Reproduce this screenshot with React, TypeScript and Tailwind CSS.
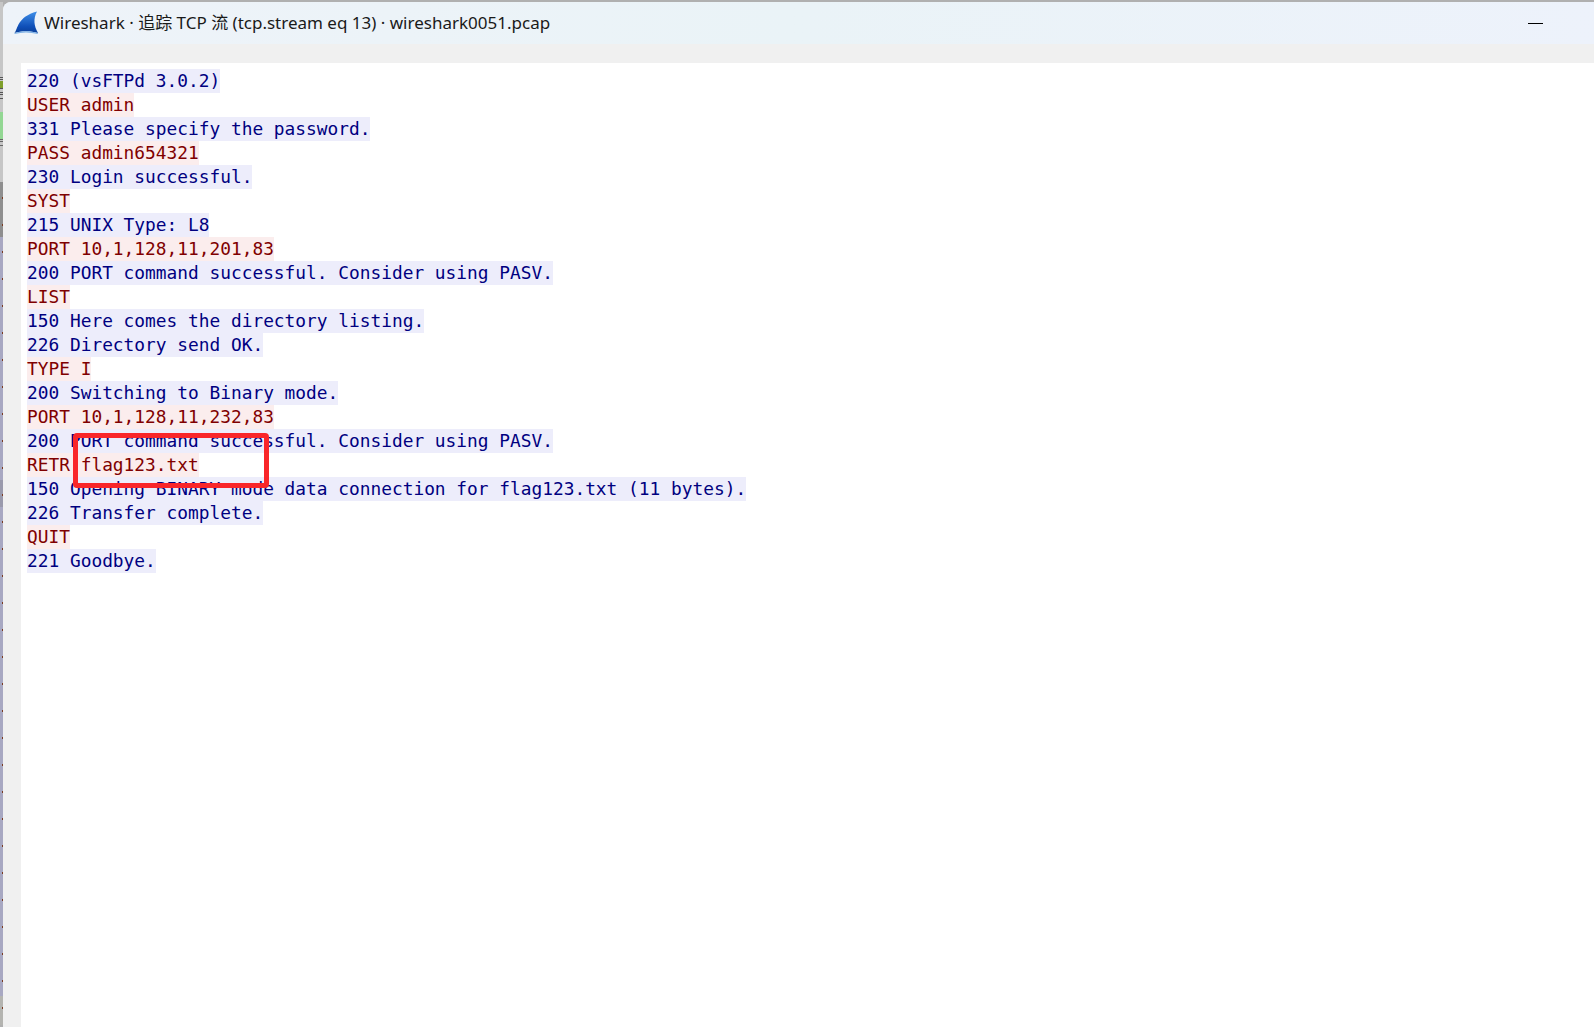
import React from 'react';

const lines: [string, boolean][] = [
  ['220 (vsFTPd 3.0.2)', true],
  ['USER admin', false],
  ['331 Please specify the password.', true],
  ['PASS admin654321', false],
  ['230 Login successful.', true],
  ['SYST', false],
  ['215 UNIX Type: L8', true],
  ['PORT 10,1,128,11,201,83', false],
  ['200 PORT command successful. Consider using PASV.', true],
  ['LIST', false],
  ['150 Here comes the directory listing.', true],
  ['226 Directory send OK.', true],
  ['TYPE I', false],
  ['200 Switching to Binary mode.', true],
  ['PORT 10,1,128,11,232,83', false],
  ['200 PORT command successful. Consider using PASV.', true],
  ['RETR flag123.txt', false],
  ['150 Opening BINARY mode data connection for flag123.txt (11 bytes).', true],
  ['226 Transfer complete.', true],
  ['QUIT', false],
  ['221 Goodbye.', true],
];

// the window behind shows through as a 3px sliver on the left
const sliver: [string, number][] = [
  ['#c6c6c6', 75],
  ['#555555', 1],
  ['#c6c6c6', 1],
  ['#555555', 1],
  ['#c6c6c6', 1],
  ['#7f9f2a', 7],
  ['#555555', 1],
  ['#c6c6c6', 3],
  ['#555555', 1],
  ['#c6c6c6', 1],
  ['#555555', 1],
  ['#c6c6c6', 3],
  ['#555555', 1],
  ['#c6c6c6', 13],
  ['#93d793', 27],
  ['#666666', 1],
  ['#c6c6c6', 1],
  ['#666666', 1],
  ['#c6c6c6', 3],
  ['#666666', 1],
  ['#c6c6c6', 36],
  ['#8f8f8f', 55],
  ['#a8a8c2', 243],
  ['#9a9aac', 27],
  ['#a8a8c2', 489],
  ['#b4b4b0', 29],
];

const dots = Array.from({ length: 31 }, (_, i) => i);

const SharkFin = () => (
  <svg width="24" height="24" viewBox="0 0 24 24">
    <defs>
      <linearGradient id="fin" x1="0" y1="0" x2="0" y2="1">
        <stop offset="0" stopColor="#3f8fe8" />
        <stop offset="0.7" stopColor="#0f4fb8" />
        <stop offset="1" stopColor="#0a3f9a" />
      </linearGradient>
    </defs>
    <path d="M0.500 22C4 18 3 6 23 0.500C19 8 20 15 24 22C16 19.500 8 19.500 0.500 22Z" fill="url(#fin)" />
    <path d="M0.500 22C8 19.500 16 19.500 24 22L23.500 23C16 21 8 21 0.500 23Z" fill="#7fb2e6" />
  </svg>
);

export default function App() {
  return (
    <div className="flex h-[1027px] w-[1594px] overflow-hidden bg-[#b0b0b0] pt-[2px] font-['Liberation_Sans',sans-serif]">
      <div className="relative flex w-[3px] shrink-0 flex-col">
        {sliver.map(([color, h], i) => (
          <div key={i} className="shrink-0" style={{ backgroundColor: color, height: h }} />
        ))}
        <div className="absolute left-[2px] top-[195px] flex flex-col">
          {dots.map((i) => (
            <div key={i} className="h-[27px] w-px">
              <div className="h-[2px] w-px bg-[#7a3a20]" />
            </div>
          ))}
        </div>
      </div>
      <div className="flex h-full flex-1 flex-col rounded-tl-lg bg-[#f0f0f0]">
        <div className="flex h-[42px] shrink-0 items-center rounded-tl-lg bg-gradient-to-r from-[#eef3f9] via-[#eaf3f7] to-[#edf2fb] pl-[11px] pr-[51px]">
          <SharkFin />
          <span className="ml-[6px] whitespace-nowrap font-['Noto_Sans','Noto_Sans_CJK_SC',sans-serif] text-[17px] text-[#1a1a1a]">
            Wireshark · 追踪 TCP 流 (tcp.stream eq 13) · wireshark0051.pcap
          </span>
          <div className="ml-auto h-px w-[15px] bg-black" />
        </div>
        <div className="ml-[18px] mt-[19px] flex-1 bg-white pl-[6px] pt-[6px]">
          <div className="relative font-['DejaVu_Sans_Mono',monospace] text-[17.84px] leading-[24px]">
            {lines.map(([text, server], i) => (
              <div key={i} className="h-[24px]">
                <span className={server ? 'inline-block h-[24px] whitespace-pre bg-[#ededfb] text-[#000080]' : 'inline-block h-[24px] whitespace-pre bg-[#fbeded] text-[#800000]'}>
                  {text}
                </span>
              </div>
            ))}
            {/* red annotation box */}
            <div className="absolute left-[46px] top-[364px] h-[55px] w-[196px] rounded-[4px] border-[5px] border-[#f9262a]" />
          </div>
        </div>
      </div>
    </div>
  );
}
